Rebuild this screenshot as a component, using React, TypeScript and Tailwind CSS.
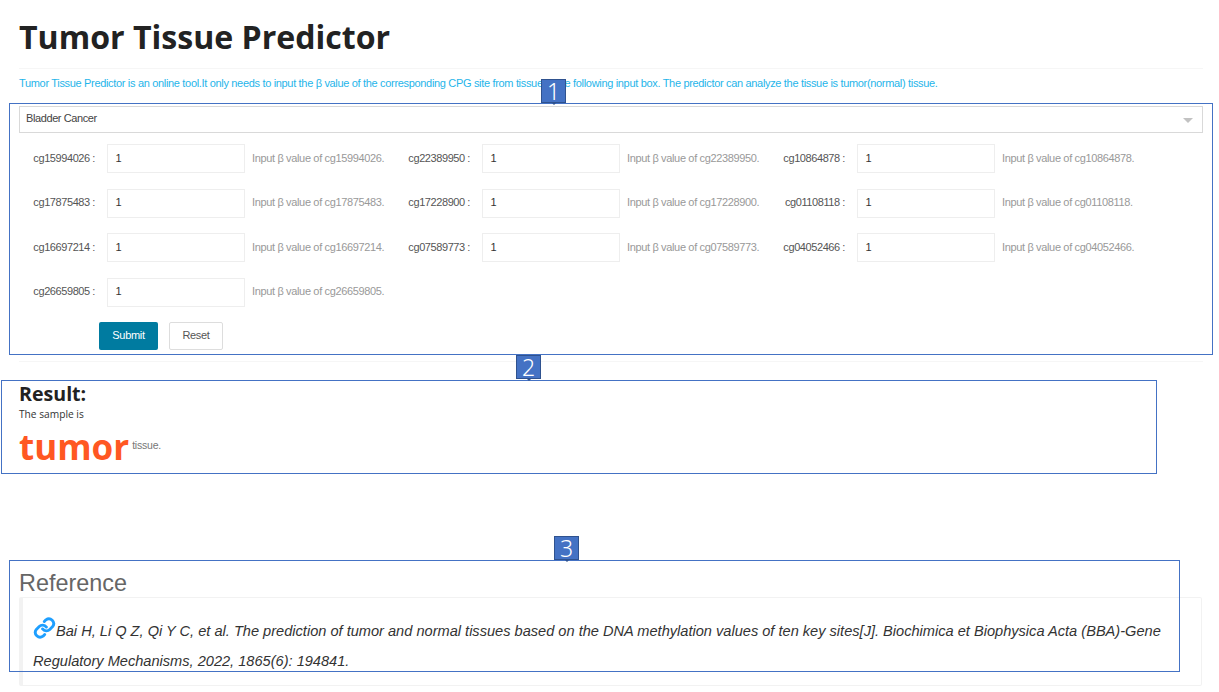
import React from "react";

const rows = [
  ["cg15994026", "cg22389950", "cg10864878"],
  ["cg17875483", "cg17228900", "cg01108118"],
  ["cg16697214", "cg07589773", "cg04052466"],
  ["cg26659805"],
];

function Field({ id }: { id: string }) {
  return (
    <div className="flex w-[375px] items-center text-[11px] tracking-[-0.35px]">
      <label className="w-[64px] shrink-0 whitespace-nowrap pb-[1px] text-right tracking-[-0.42px] text-[#555]">{id} :</label>
      <div className="ml-[12px] flex h-[29px] w-[138px] shrink-0 items-center border border-[#eeeeee] bg-white pb-[1px] pl-[7.5px] text-[#333]">1</div>
      <span className="ml-[7px] whitespace-nowrap pb-[1px] text-[#999]">Input β value of {id}.</span>
    </div>
  );
}

function Callout({ n, box, tag }: { n: string; box: string; tag: string }) {
  return (
    <>
      <div className={`pointer-events-none absolute border border-[#4472c4] ${box}`} />
      <div className={`absolute flex h-[24px] w-[25px] items-center justify-center border border-[#2f528f] bg-[#4472c4] font-['Noto_Sans',sans-serif] text-[23px] font-light leading-none text-white ${tag}`}>
        {n}
        <span className="absolute left-1/2 top-full -ml-[3px] h-0 w-0 border-x-[3px] border-t-[3px] border-x-transparent border-t-[#2f528f]" />
      </div>
    </>
  );
}

export default function App() {
  return (
    <div className="relative h-[692px] w-[1219px] overflow-hidden bg-white px-[19px] font-['Liberation_Sans',Arial,sans-serif]">
      <h1 className="pt-[15px] font-['Open_Sans',sans-serif] text-[32.1px] font-bold leading-[44px] text-[#222]">Tumor Tissue Predictor</h1>
      <div className="mt-[9px] h-px w-[1184px] bg-[#f6f6f6]" />
      <p className="mt-[7px] h-[14px] whitespace-nowrap text-[11px] leading-[14px] tracking-[-0.325px] text-[#1fb5ea]">
        Tumor Tissue Predictor is an online tool.It only needs to input the β value of the corresponding CPG site from tissue in the following input box. The predictor can analyze the tissue is tumor(normal) tissue.
      </p>

      <div className="mt-[16px] flex h-[27px] w-[1184px] items-center justify-between border border-[#d9d9d9] pb-[2px] pl-[6px] pr-[9px] text-[11px] tracking-[-0.4px] text-[#444]">
        <span>Bladder Cancer</span>
        <span className="mt-[3px] h-0 w-0 border-x-[5px] border-t-[5px] border-x-transparent border-t-[#c2c2c2]" />
      </div>

      <div className="mt-[11px] flex flex-col gap-[15.5px] pl-[12px]">
        {rows.map((r) => (
          <div key={r[0]} className="flex">
            {r.map((id) => (
              <Field key={id} id={id} />
            ))}
          </div>
        ))}
      </div>

      <div className="mt-[15px] flex gap-[11px] pl-[80px]">
        <button className="flex h-[28px] w-[59px] items-center justify-center rounded-[2px] bg-[#007ba0] text-[11px] tracking-[-0.3px] text-white">Submit</button>
        <button className="flex h-[28px] w-[54px] items-center justify-center rounded-[2px] border border-[#dddddd] bg-white text-[11px] tracking-[-0.3px] text-[#555]">Reset</button>
      </div>

      <div className="mt-[11px] h-px w-[1184px] bg-[#f6f6f6]" />

      <h2 className="mt-[19px] font-['Open_Sans',sans-serif] text-[19.6px] font-bold leading-[26px] text-[#222]">Result:</h2>
      <p className="font-['Open_Sans',sans-serif] text-[10.2px] leading-[15px] text-[#333]">The sample is</p>
      <div className="mt-[2px] flex items-baseline">
        <span className="font-['Open_Sans',sans-serif] text-[35px] font-bold leading-[45px] text-[#ff5722]">tumor</span>
        <span className="relative -top-[11px] ml-[3px] text-[10.5px] tracking-[-0.2px] text-[#777]">tissue.</span>
      </div>

      <h3 className="mt-[101px] text-[23.4px] leading-[27px] text-[#666]">Reference</h3>
      <div className="h-[89px] w-[1183px] rounded-[2px] border border-l-[4px] border-[#f2f2f2] pl-[10px] pt-[18px] text-[14.6px] italic leading-[30px] text-[#333]">
        <svg className="mb-[-4px] inline-block h-[24px] w-[23px] align-baseline" viewBox="0 0 24 24" fill="none" stroke="#1e9fff" strokeWidth="3" strokeLinecap="round" strokeLinejoin="round">
          <path d="M10 13a5 5 0 0 0 7.5.5l3-3a5 5 0 0 0-7-7l-1.7 1.7" />
          <path d="M14 11a5 5 0 0 0-7.5-.5l-3 3a5 5 0 0 0 7 7l1.7-1.7" />
        </svg>
        Bai H, Li Q Z, Qi Y C, et al. The prediction of tumor and normal tissues based on the DNA methylation values of ten key sites[J]. Biochimica et Biophysica Acta (BBA)-Gene Regulatory Mechanisms, 2022, 1865(6): 194841.
      </div>

      <Callout n="1" box="left-[9px] top-[103px] h-[252px] w-[1204px]" tag="left-[541px] top-[79px]" />
      <Callout n="2" box="left-[1px] top-[380px] h-[94px] w-[1156px]" tag="left-[516px] top-[355px]" />
      <Callout n="3" box="left-[9px] top-[560px] h-[112px] w-[1171px]" tag="left-[554px] top-[536px]" />
    </div>
  );
}
